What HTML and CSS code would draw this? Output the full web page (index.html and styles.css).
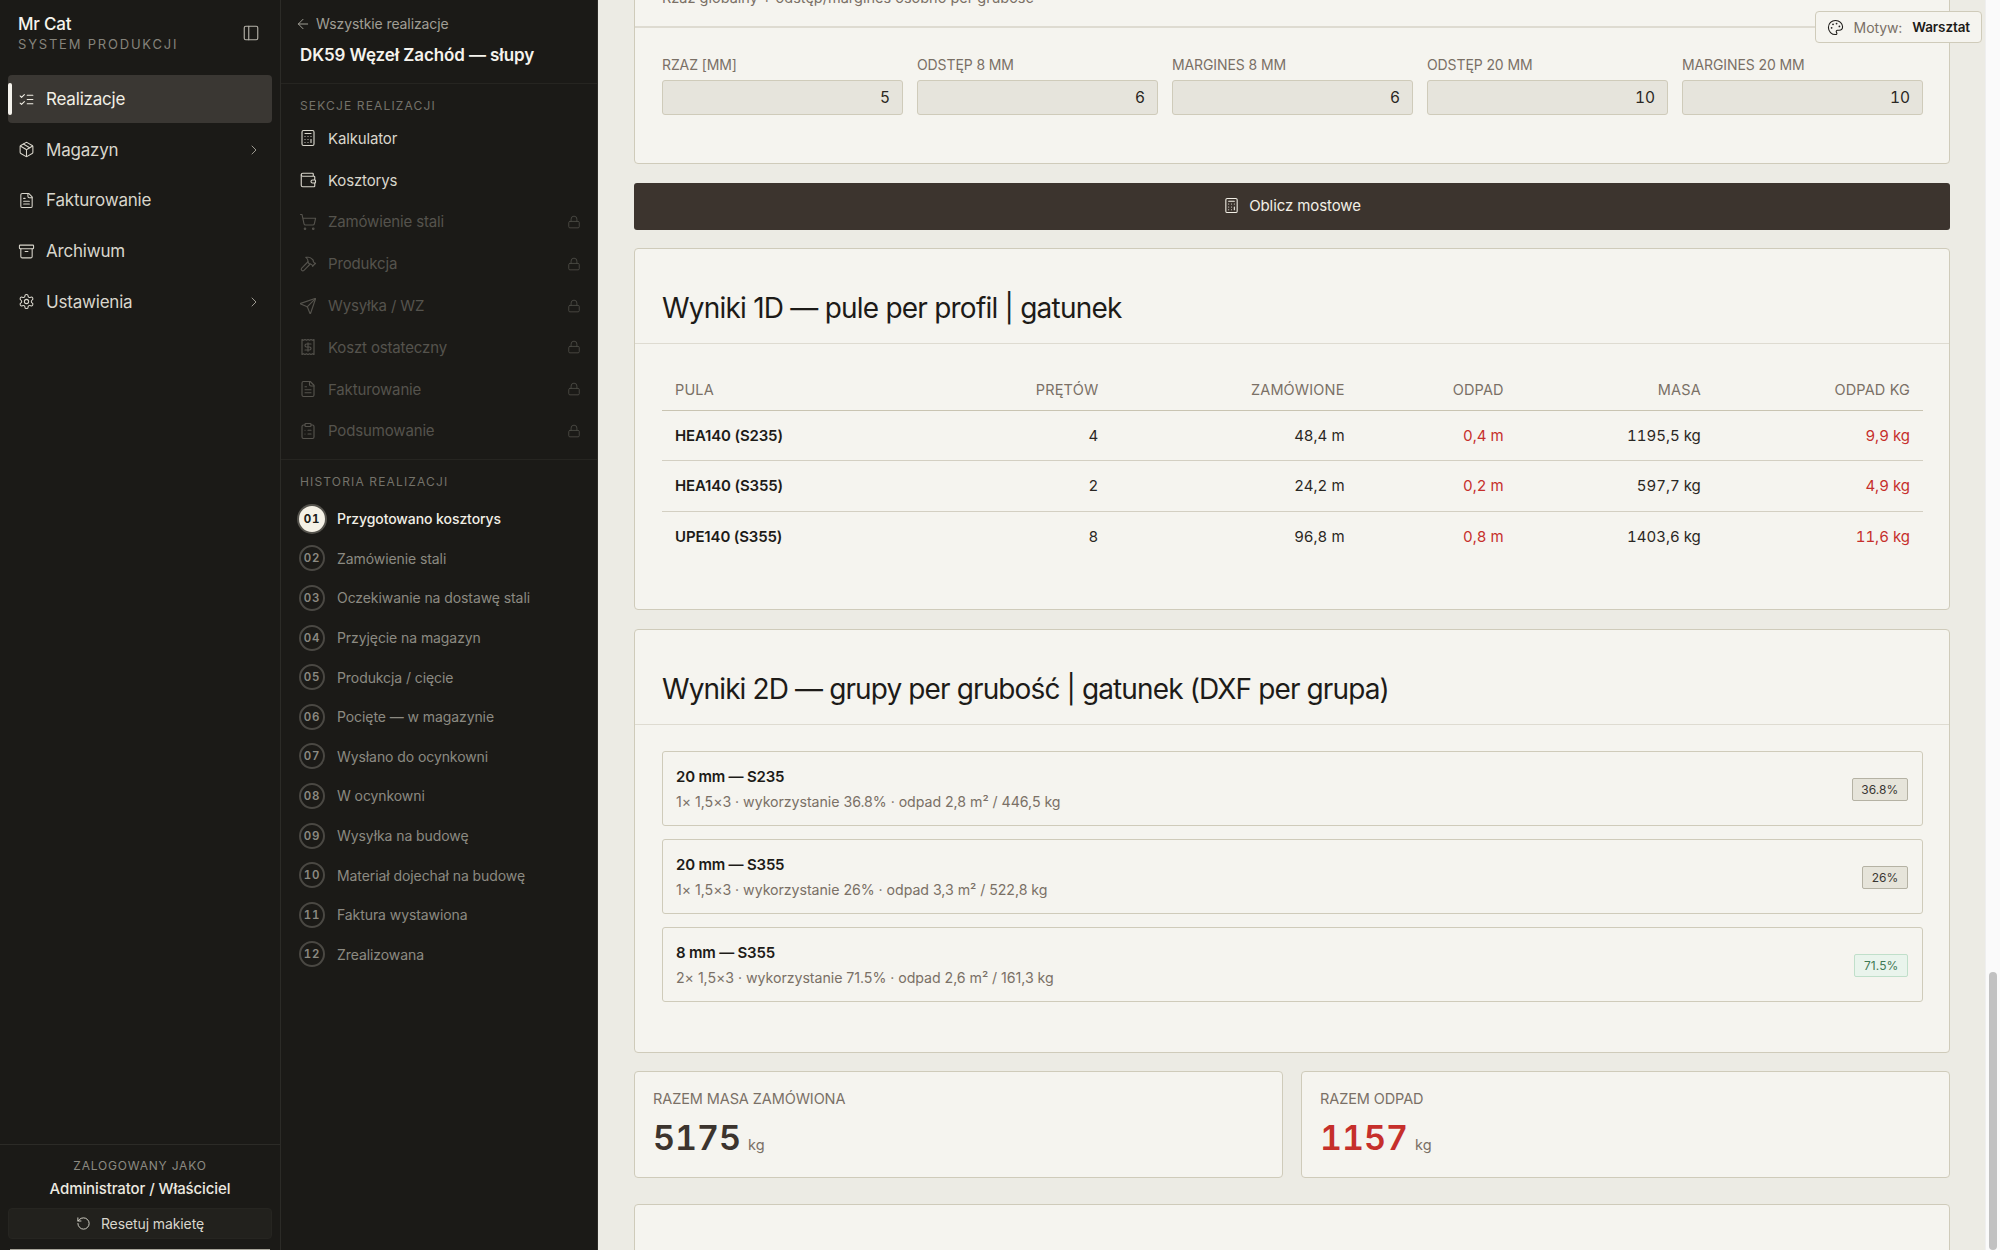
FILE: index.html
```html
<!DOCTYPE html>
<html lang="pl">
<head>
<meta charset="utf-8">
<title>DK59 Węzeł Zachód — słupy</title>
<link rel="stylesheet" href="styles.css">
</head>
<body>
<svg class="sprite" xmlns="http://www.w3.org/2000/svg">
  <symbol id="i-list" viewBox="0 0 24 24"><path d="m3 17 2 2 4-4"/><path d="m3 7 2 2 4-4"/><path d="M13 6h8"/><path d="M13 12h8"/><path d="M13 18h8"/></symbol>
  <symbol id="i-package" viewBox="0 0 24 24"><path d="M11 21.73a2 2 0 0 0 2 0l7-4A2 2 0 0 0 21 16V8a2 2 0 0 0-1-1.73l-7-4a2 2 0 0 0-2 0l-7 4A2 2 0 0 0 3 8v8a2 2 0 0 0 1 1.73z"/><path d="M12 22V12"/><path d="m3.3 7 7.703 4.734a2 2 0 0 0 1.994 0L20.7 7"/><path d="m7.5 4.27 9 5.15"/></symbol>
  <symbol id="i-file" viewBox="0 0 24 24"><path d="M15 2H6a2 2 0 0 0-2 2v16a2 2 0 0 0 2 2h12a2 2 0 0 0 2-2V7Z"/><path d="M14 2v4a2 2 0 0 0 2 2h4"/><path d="M10 9H8"/><path d="M16 13H8"/><path d="M16 17H8"/></symbol>
  <symbol id="i-archive" viewBox="0 0 24 24"><rect x="2" y="3" width="20" height="5" rx="1"/><path d="M4 8v11a2 2 0 0 0 2 2h12a2 2 0 0 0 2-2V8"/><path d="M10 12h4"/></symbol>
  <symbol id="i-settings" viewBox="0 0 24 24"><path d="M12.22 2h-.44a2 2 0 0 0-2 2v.18a2 2 0 0 1-1 1.73l-.43.25a2 2 0 0 1-2 0l-.15-.08a2 2 0 0 0-2.73.73l-.22.38a2 2 0 0 0 .73 2.73l.15.1a2 2 0 0 1 1 1.72v.51a2 2 0 0 1-1 1.74l-.15.09a2 2 0 0 0-.73 2.73l.22.38a2 2 0 0 0 2.73.73l.15-.08a2 2 0 0 1 2 0l.43.25a2 2 0 0 1 1 1.73V20a2 2 0 0 0 2 2h.44a2 2 0 0 0 2-2v-.18a2 2 0 0 1 1-1.73l.43-.25a2 2 0 0 1 2 0l.15.08a2 2 0 0 0 2.73-.73l.22-.39a2 2 0 0 0-.73-2.73l-.15-.08a2 2 0 0 1-1-1.74v-.5a2 2 0 0 1 1-1.74l.15-.09a2 2 0 0 0 .73-2.73l-.22-.38a2 2 0 0 0-2.73-.73l-.15.08a2 2 0 0 1-2 0l-.43-.25a2 2 0 0 1-1-1.73V4a2 2 0 0 0-2-2z"/><circle cx="12" cy="12" r="3"/></symbol>
  <symbol id="i-chevron" viewBox="0 0 24 24"><path d="m9 18 6-6-6-6"/></symbol>
  <symbol id="i-panel" viewBox="0 0 24 24"><rect x="3" y="3" width="18" height="18" rx="2"/><path d="M9 3v18"/></symbol>
  <symbol id="i-back" viewBox="0 0 24 24"><path d="m12 19-7-7 7-7"/><path d="M19 12H5"/></symbol>
  <symbol id="i-calc" viewBox="0 0 24 24"><rect x="4" y="2" width="16" height="20" rx="2"/><path d="M8 6h8"/><path d="M16 14v4"/><path d="M16 10h.01"/><path d="M12 10h.01"/><path d="M8 10h.01"/><path d="M12 14h.01"/><path d="M8 14h.01"/><path d="M12 18h.01"/><path d="M8 18h.01"/></symbol>
  <symbol id="i-wallet" viewBox="0 0 24 24"><path d="M19 7V4a1 1 0 0 0-1-1H5a2 2 0 0 0 0 4h15a1 1 0 0 1 1 1v4h-3a2 2 0 0 0 0 4h3a1 1 0 0 0 1-1v-2a1 1 0 0 0-1-1"/><path d="M3 5v14a2 2 0 0 0 2 2h15a1 1 0 0 0 1-1v-4"/></symbol>
  <symbol id="i-cart" viewBox="0 0 24 24"><circle cx="8" cy="21" r="1"/><circle cx="19" cy="21" r="1"/><path d="M2.05 2.05h2l2.66 12.42a2 2 0 0 0 2 1.58h9.78a2 2 0 0 0 1.95-1.57l1.65-7.43H5.12"/></symbol>
  <symbol id="i-hammer" viewBox="0 0 24 24"><path d="m15 12-8.373 8.373a1 1 0 1 1-3-3L12 9"/><path d="m18 15 4-4"/><path d="m21.5 11.5-1.914-1.914A2 2 0 0 1 19 8.172V7l-2.26-2.26a6 6 0 0 0-4.202-1.756L9 2.96l.92.82A6.18 6.18 0 0 1 12 8.4V10l2 2h1.172a2 2 0 0 1 1.414.586L18.5 14.5"/></symbol>
  <symbol id="i-send" viewBox="0 0 24 24"><path d="M14.536 21.686a.5.5 0 0 0 .937-.024l6.5-19a.496.496 0 0 0-.635-.635l-19 6.5a.5.5 0 0 0-.024.937l7.93 3.18a2 2 0 0 1 1.112 1.11z"/><path d="m21.854 2.147-10.94 10.939"/></symbol>
  <symbol id="i-receipt" viewBox="0 0 24 24"><path d="M4 2v20l2-1 2 1 2-1 2 1 2-1 2 1 2-1 2 1V2l-2 1-2-1-2 1-2-1-2 1-2-1-2 1Z"/><path d="M16 8h-6a2 2 0 1 0 0 4h4a2 2 0 1 1 0 4H8"/><path d="M12 17.5v-11"/></symbol>
  <symbol id="i-clipboard" viewBox="0 0 24 24"><rect x="8" y="2" width="8" height="4" rx="1"/><path d="M16 4h2a2 2 0 0 1 2 2v14a2 2 0 0 1-2 2H6a2 2 0 0 1-2-2V6a2 2 0 0 1 2-2h2"/><path d="M12 11h4"/><path d="M12 16h4"/><path d="M8 11h.01"/><path d="M8 16h.01"/></symbol>
  <symbol id="i-lock" viewBox="0 0 24 24"><rect x="3" y="11" width="18" height="11" rx="2"/><path d="M7 11V7a5 5 0 0 1 10 0v4"/></symbol>
  <symbol id="i-reset" viewBox="0 0 24 24"><path d="M3 12a9 9 0 1 0 9-9 9.75 9.75 0 0 0-6.74 2.74L3 8"/><path d="M3 3v5h5"/></symbol>
  <symbol id="i-palette" viewBox="0 0 24 24"><path d="M12 22a1 1 0 0 1 0-20 10 9 0 0 1 10 9 5 5 0 0 1-5 5h-2.25a1.75 1.75 0 0 0-1.4 2.8l.3.4a1.75 1.75 0 0 1-1.4 2.8z"/><circle cx="13.5" cy="6.5" r=".5" fill="currentColor"/><circle cx="17.5" cy="10.5" r=".5" fill="currentColor"/><circle cx="6.5" cy="12.5" r=".5" fill="currentColor"/><circle cx="8.5" cy="7.5" r=".5" fill="currentColor"/></symbol>
</svg>

<div class="app">
  <aside class="side">
    <div class="brand">
      <div>
        <div class="brand_name">Mr Cat</div>
        <div class="brand_sub">SYSTEM PRODUKCJI</div>
      </div>
      <svg class="ico brand_toggle"><use href="#i-panel"/></svg>
    </div>
    <nav class="nav">
      <a class="nav_item active"><svg class="ico"><use href="#i-list"/></svg>Realizacje</a>
      <a class="nav_item"><svg class="ico"><use href="#i-package"/></svg>Magazyn<svg class="ico nav_arrow"><use href="#i-chevron"/></svg></a>
      <a class="nav_item"><svg class="ico"><use href="#i-file"/></svg>Fakturowanie</a>
      <a class="nav_item"><svg class="ico"><use href="#i-archive"/></svg>Archiwum</a>
      <a class="nav_item"><svg class="ico"><use href="#i-settings"/></svg>Ustawienia<svg class="ico nav_arrow"><use href="#i-chevron"/></svg></a>
    </nav>
    <div class="user">
      <div class="user_label">ZALOGOWANY JAKO</div>
      <div class="user_name">Administrator / Właściciel</div>
      <a class="user_reset"><svg class="ico"><use href="#i-reset"/></svg>Resetuj makietę</a>
      <div class="user_next"></div>
    </div>
  </aside>

  <aside class="sub">
    <div class="sub_head">
      <a class="sub_back"><svg class="ico"><use href="#i-back"/></svg>Wszystkie realizacje</a>
      <div class="sub_title">DK59 Węzeł Zachód — słupy</div>
    </div>
    <div class="sec">
      <div class="sec_title">SEKCJE REALIZACJI</div>
      <a class="sec_item"><svg class="ico"><use href="#i-calc"/></svg>Kalkulator</a>
      <a class="sec_item"><svg class="ico"><use href="#i-wallet"/></svg>Kosztorys</a>
      <a class="sec_item off"><svg class="ico"><use href="#i-cart"/></svg>Zamówienie stali<svg class="ico lock"><use href="#i-lock"/></svg></a>
      <a class="sec_item off"><svg class="ico"><use href="#i-hammer"/></svg>Produkcja<svg class="ico lock"><use href="#i-lock"/></svg></a>
      <a class="sec_item off"><svg class="ico"><use href="#i-send"/></svg>Wysyłka / WZ<svg class="ico lock"><use href="#i-lock"/></svg></a>
      <a class="sec_item off"><svg class="ico"><use href="#i-receipt"/></svg>Koszt ostateczny<svg class="ico lock"><use href="#i-lock"/></svg></a>
      <a class="sec_item off"><svg class="ico"><use href="#i-file"/></svg>Fakturowanie<svg class="ico lock"><use href="#i-lock"/></svg></a>
      <a class="sec_item off"><svg class="ico"><use href="#i-clipboard"/></svg>Podsumowanie<svg class="ico lock"><use href="#i-lock"/></svg></a>
    </div>
    <div class="hist">
      <div class="sec_title">HISTORIA REALIZACJI</div>
      <div class="step current"><span class="step_no">01</span>Przygotowano kosztorys</div>
      <div class="step"><span class="step_no">02</span>Zamówienie stali</div>
      <div class="step"><span class="step_no">03</span>Oczekiwanie na dostawę stali</div>
      <div class="step"><span class="step_no">04</span>Przyjęcie na magazyn</div>
      <div class="step"><span class="step_no">05</span>Produkcja / cięcie</div>
      <div class="step"><span class="step_no">06</span>Pocięte — w magazynie</div>
      <div class="step"><span class="step_no">07</span>Wysłano do ocynkowni</div>
      <div class="step"><span class="step_no">08</span>W ocynkowni</div>
      <div class="step"><span class="step_no">09</span>Wysyłka na budowę</div>
      <div class="step"><span class="step_no">10</span>Materiał dojechał na budowę</div>
      <div class="step"><span class="step_no">11</span>Faktura wystawiona</div>
      <div class="step"><span class="step_no">12</span>Zrealizowana</div>
    </div>
  </aside>

  <main class="main">
    <div class="scrolled">
      <section class="card card_params">
        <div class="card_note">Rzaz globalny + odstęp/margines osobno per grubość</div>
        <div class="params">
          <label class="param"><span class="param_label">RZAZ [MM]</span><span class="param_input">5</span></label>
          <label class="param"><span class="param_label">ODSTĘP 8 MM</span><span class="param_input">6</span></label>
          <label class="param"><span class="param_label">MARGINES 8 MM</span><span class="param_input">6</span></label>
          <label class="param"><span class="param_label">ODSTĘP 20 MM</span><span class="param_input">10</span></label>
          <label class="param"><span class="param_label">MARGINES 20 MM</span><span class="param_input">10</span></label>
        </div>
      </section>

      <a class="calc_btn"><svg class="ico"><use href="#i-calc"/></svg>Oblicz mostowe</a>

      <section class="card card_1d">
        <h2 class="card_title">Wyniki 1D — pule per profil | gatunek</h2>
        <div class="card_body">
          <table class="tbl">
            <colgroup><col class="c1"><col class="c2"><col class="c3"><col class="c4"><col class="c5"><col class="c6"></colgroup>
            <thead>
              <tr><th class="l">PULA</th><th>PRĘTÓW</th><th>ZAMÓWIONE</th><th>ODPAD</th><th>MASA</th><th>ODPAD KG</th></tr>
            </thead>
            <tbody>
              <tr><td class="l">HEA140 (S235)</td><td>4</td><td>48,4 m</td><td class="red">0,4 m</td><td>1195,5 kg</td><td class="red">9,9 kg</td></tr>
              <tr><td class="l">HEA140 (S355)</td><td>2</td><td>24,2 m</td><td class="red">0,2 m</td><td>597,7 kg</td><td class="red">4,9 kg</td></tr>
              <tr><td class="l">UPE140 (S355)</td><td>8</td><td>96,8 m</td><td class="red">0,8 m</td><td>1403,6 kg</td><td class="red">11,6 kg</td></tr>
            </tbody>
          </table>
        </div>
      </section>

      <section class="card card_2d">
        <h2 class="card_title">Wyniki 2D — grupy per grubość | gatunek (DXF per grupa)</h2>
        <div class="card_body groups">
          <div class="group">
            <div><div class="group_name">20 mm — S235</div><div class="group_info">1× 1,5×3 · wykorzystanie 36.8% · odpad 2,8 m² / 446,5 kg</div></div>
            <span class="tag">36.8%</span>
          </div>
          <div class="group">
            <div><div class="group_name">20 mm — S355</div><div class="group_info">1× 1,5×3 · wykorzystanie 26% · odpad 3,3 m² / 522,8 kg</div></div>
            <span class="tag">26%</span>
          </div>
          <div class="group">
            <div><div class="group_name">8 mm — S355</div><div class="group_info">2× 1,5×3 · wykorzystanie 71.5% · odpad 2,6 m² / 161,3 kg</div></div>
            <span class="tag good">71.5%</span>
          </div>
        </div>
      </section>

      <div class="stats">
        <div class="card stat">
          <div class="stat_label">RAZEM MASA ZAMÓWIONA</div>
          <div class="stat_value">5175<span class="stat_unit">kg</span></div>
        </div>
        <div class="card stat">
          <div class="stat_label">RAZEM ODPAD</div>
          <div class="stat_value red">1157<span class="stat_unit">kg</span></div>
        </div>
      </div>

      <section class="card card_next"></section>
    </div>
    <div class="theme"><svg class="ico"><use href="#i-palette"/></svg><span class="theme_label">Motyw:</span><b>Warsztat</b></div>
  </main>

  <div class="scroll"><div class="scroll_thumb"></div></div>
</div>
</body>
</html>
```

FILE: styles.css
```css
*{margin:0; padding:0; box-sizing:border-box;}
html,body{height:100%; overflow:hidden;}
body{font-family:"Inter","Noto Sans",sans-serif; font-size:14px; color:#1d1b18; background:#ecebe4;}
.sprite{display:none;}
.ico{width:16px; height:16px; flex:none; fill:none; stroke:currentColor; stroke-width:1.5; stroke-linecap:round; stroke-linejoin:round;}
.app{display:flex; height:1250px;}

/* left nav */
.side{width:281px; flex:none; background:#1b1a17; border-right:1px solid #2c2b27; display:flex; flex-direction:column; color:#d9d6cc;}
.brand{height:75px; padding:14px 20px 0 18px; display:flex; justify-content:space-between; align-items:flex-start;}
.brand_name{font-size:17px; font-weight:500; color:#f5f3ed; line-height:20px; letter-spacing:-.2px;}
.brand_sub{font-size:13px; color:#85837b; letter-spacing:1.8px; line-height:18px; margin-top:1px; white-space:nowrap;}
.brand_toggle{width:18px; height:18px; margin-top:10px; color:#b5b2a9;}
.nav{padding:0 8px; flex:1;}
.nav_item{display:flex; align-items:center; gap:11px; height:48px; padding:0 10px; margin-bottom:2.7px; font-size:17px; color:#d9d6cc; border-radius:4px; position:relative; letter-spacing:-.2px;}
.nav_item.active{background:#3a3733; color:#f2efe6;}
.nav_item.active:before{content:''; position:absolute; left:0; top:8px; bottom:8px; width:4px; background:#f5f3ed; border-radius:2px;}
.nav_item .ico:first-child{width:17px; height:17px;}
.nav_arrow{margin-left:auto; width:16px; height:16px; color:#9a978e;}
.user{border-top:1px solid #2c2b27; padding:13px 8px 0; height:106px; text-align:center; position:relative;}
.user_label{font-size:12px; color:#8c8a82; letter-spacing:.8px; line-height:16px;}
.user_name{font-size:15px; font-weight:500; color:#ece9e0; line-height:20px; margin-top:5px; letter-spacing:-.1px;}
.user_reset{display:flex; align-items:center; justify-content:center; gap:10px; height:31px; margin-top:9px; background:#22211d; border:1px solid #262521; border-radius:4px; color:#d9d6cc; font-size:14px; letter-spacing:-.1px;}
.user_reset .ico{width:15px; height:15px;}
.user_next{height:1px; margin:10px 2px 0; background:#a8a59b;}

/* realization nav */
.sub{width:317px; flex:none; background:#1b1a17; border-right:1px solid #2c2b27; color:#d9d6cc;}
.sub_head{height:84px; padding:15px 19px 0; border-bottom:1px solid #262521;}
.sub_back{display:flex; align-items:center; gap:5px; font-size:14px; color:#a09e95; line-height:18px; margin-left:-5px; letter-spacing:-.1px;}
.sub_back .ico{width:16px; height:16px;}
.sub_title{font-size:17px; font-weight:600; color:#f5f3ed; margin-top:11px; line-height:22px; letter-spacing:-.1px; white-space:nowrap;}
.sec{height:376px; padding:14px 16px 0 18px; border-bottom:1px solid #262521;}
.sec_title{font-size:12px; color:#74726a; letter-spacing:1.15px; line-height:16px; margin-left:1px;}
.sec_item{display:flex; align-items:center; gap:11px; height:41.8px; font-size:15px; color:#d9d6cc; letter-spacing:-.15px;}
.sec_title + .sec_item{margin-top:3.5px;}
.sec_item .ico:first-child{width:18px; height:18px;}
.sec_item.off{color:#55534d;}
.lock{margin-left:auto; width:14px; height:14px; color:#4d4b46;}
.hist{padding:14px 19px 0 18px;}
.step{display:flex; align-items:center; gap:12px; height:39.6px; font-size:14px; color:#8c8a82; white-space:nowrap; letter-spacing:-.08px;}
.hist .sec_title + .step{margin-top:9px;}
.step_no{width:26px; height:26px; flex:none; border:2px solid #4a4843; border-radius:50%; display:flex; align-items:center; justify-content:center; font-size:11.5px; font-weight:600; letter-spacing:.9px; color:#8c8a82; font-variant-numeric:tabular-nums;}
.step.current{color:#f2efe6; font-weight:500;}
.step.current .step_no{background:#f5f1e6; color:#1b1a17; border-color:#f5f1e6; box-shadow:0 0 0 2px #55534d; font-weight:700;}

/* content */
.main{flex:1; min-width:0; position:relative; overflow:hidden; background:#ecebe4;}
.scrolled{padding:0 35px 0 36px; margin-top:-52px;}
.card{background:#f5f4ef; border:1px solid #cfcbba; border-radius:4px;}
.card_params{height:216px;}
.card_note{height:79px; padding:39px 26px 0 27px; border-bottom:2px solid #dedbd1; font-size:14.5px; color:#7a7066; line-height:20px;}
.params{display:grid; grid-template-columns:repeat(5,1fr); gap:14px; padding:28px 26px 0 27px;}
.param{display:block;}
.param_label{display:block; font-size:14px; color:#7a7066; line-height:18px; margin-bottom:6px; white-space:nowrap; letter-spacing:-.1px;}
.param_input{display:block; height:35px; line-height:33px; background:#e6e4dc; border:1px solid #cfcbba; border-radius:3px; text-align:right; padding-right:12px; font-size:15.5px; color:#2a2723; font-variant-numeric:tabular-nums;}
.calc_btn{display:flex; align-items:center; justify-content:center; gap:9px; height:47px; margin-top:18.5px; padding-bottom:1px; background:#3c342e; border-radius:3px; color:#f2efe6; font-size:15px; letter-spacing:-.1px;}
.calc_btn .ico{width:17px; height:17px;}
.card_1d{height:362px; margin-top:18.5px;}
.card_2d{height:424px; margin-top:18.5px;}
.card_title{height:95px; padding:41px 26px 0 27px; font-size:28px; font-weight:400; line-height:36px; border-bottom:1px solid #dedbd1; letter-spacing:-.78px; color:#1d1b18; white-space:nowrap;}
.card_2d .card_title{letter-spacing:-.88px;}
.card_body{padding:26px 26px 0 27px;}
.tbl{width:100%; table-layout:fixed; border-collapse:collapse; font-size:15px;}
.c1{width:270px;} .c2{width:179px;} .c3{width:246px;} .c4{width:159px;} .c5{width:197px;} .c6{width:209px;}
.tbl th{height:40px; padding:0 13px 1px; text-align:right; font-weight:400; font-size:14.5px; letter-spacing:.15px; color:#7a7066; border-bottom:1px solid #c9c4b2;}
.tbl td{height:50.5px; padding:0 13px; text-align:right; color:#2a2723; border-bottom:1px solid #d3cfc2; font-variant-numeric:tabular-nums;}
.tbl tr:last-child td{border-bottom:0;}
.tbl .l{text-align:left;}
.tbl td.l{font-weight:600; font-size:15px; color:#1d1b18; letter-spacing:-.15px; font-variant-numeric:normal;}
.tbl td.red{color:#c62f2b;}
.groups{display:flex; flex-direction:column; gap:13px;}
.group{height:75px; border:1px solid #cfcbba; border-radius:3px; padding:3px 14px 0 13px; display:flex; align-items:center; justify-content:space-between;}
.group_name{font-size:15px; font-weight:600; line-height:20px; letter-spacing:-.2px; color:#1d1b18;}
.group_info{font-size:14.2px; color:#7a7066; line-height:20px; margin-top:5px; letter-spacing:-.05px;}
.tag{height:23px; line-height:21px; padding:0 8.5px; background:#e6e4da; border:1px solid #b5b2a4; border-radius:2px; font-size:12px; color:#3a3733; letter-spacing:.1px; margin-top:-1px;}
.tag.good{background:#e9f4ec; border-color:#c0dfca; color:#3f7a55;}
.stats{display:grid; grid-template-columns:1fr 1fr; gap:18px; margin-top:18px;}
.stat{height:107px; padding:17px 18px 0;}
.stat_label{font-size:14.5px; color:#7a7066; line-height:20px; letter-spacing:-.1px;}
.stat_value{font-size:34px; font-weight:600; line-height:44px; margin-top:7px; color:#3c342e; font-variant-numeric:tabular-nums;}
.stat_value.red{color:#c62f2b;}
.stat_unit{font-size:14.5px; font-weight:400; color:#7a7066; margin-left:7px;}
.card_next{height:200px; margin-top:26px;}
.theme{position:absolute; right:3px; top:11px; height:32px; padding:0 11px; display:flex; align-items:center; background:#f5f4ef; border:1px solid #cfcbba; border-radius:4px; font-size:14px; color:#7a7066;}
.theme .ico{margin-right:10px; color:#1d1b18; width:17px; height:17px;}
.theme_label{margin-right:10px; letter-spacing:-.1px;}
.theme b{font-weight:600; font-size:13.5px; color:#1d1b18; letter-spacing:-.1px;}

/* fake page scrollbar */
.scroll{width:15px; flex:none; background:#fafafa; border-left:1px solid #efefef; padding:972px 3px 0 3px;}
.scroll_thumb{height:278px; background:#c1c1c1; border-radius:4px;}
```
